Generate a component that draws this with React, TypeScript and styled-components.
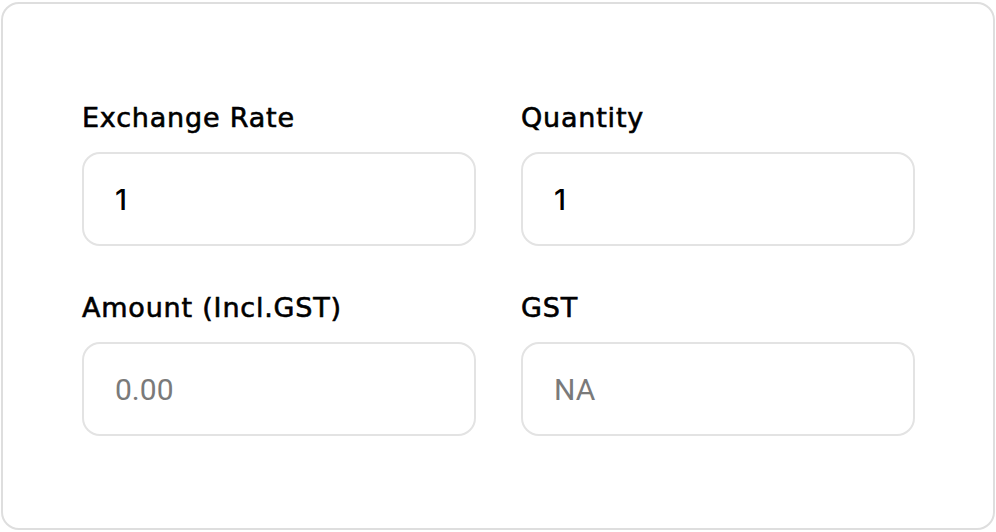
import React from "react";
import styled, { createGlobalStyle } from "styled-components";

const GlobalStyle = createGlobalStyle`
  body {
    margin: 0;
    background: #ffffff;
    font-family: "DejaVu Sans", "Noto Sans", sans-serif;
  }
`;

const fields = [
  { label: "Exchange Rate", value: "1", placeholder: "" },
  { label: "Quantity", value: "1", placeholder: "" },
  { label: "Amount (Incl.GST)", value: "", placeholder: "0.00" },
  { label: "GST", value: "", placeholder: "NA" },
];

const App = () => {
  return (
    <>
      <GlobalStyle />
      <Page>
        <Card>
          <Grid>
            {fields.map((f) => (
              <Field key={f.label}>
                <Label>{f.label}</Label>
                <Input defaultValue={f.value} placeholder={f.placeholder} />
              </Field>
            ))}
          </Grid>
        </Card>
      </Page>
    </>
  );
};

export default App;

const Page = styled.div`
  padding: 2px 1px 0 1px;
`;

const Card = styled.div`
  box-sizing: border-box;
  width: 994px;
  height: 528px;
  border: 2px solid #dedede;
  border-radius: 18px;
  padding: 96px 79px 0 79px;
  background: #fff;
`;

const Grid = styled.div`
  display: grid;
  grid-template-columns: 394px 394px;
  column-gap: 45px;
  row-gap: 44px;
`;

const Field = styled.div`
  display: flex;
  flex-direction: column;
  gap: 16px;
`;

const Label = styled.label`
  font-size: 27px;
  line-height: 36px;
  font-weight: 400;
  color: #000;
  letter-spacing: 0.8px;
  -webkit-text-stroke: 0.6px #000;
`;

const Input = styled.input`
  box-sizing: border-box;
  width: 394px;
  height: 94px;
  border: 2px solid #e3e3e3;
  border-radius: 18px;
  padding: 0 31px;
  font-family: "Inter", "Noto Sans", sans-serif;
  font-size: 29px;
  font-weight: 500;
  color: #000;
  outline: none;
  background: #fff;

  &::placeholder {
    font-family: "Roboto", sans-serif;
    font-size: 30px;
    font-weight: 400;
    color: #7a7a7a;
  }
`;
